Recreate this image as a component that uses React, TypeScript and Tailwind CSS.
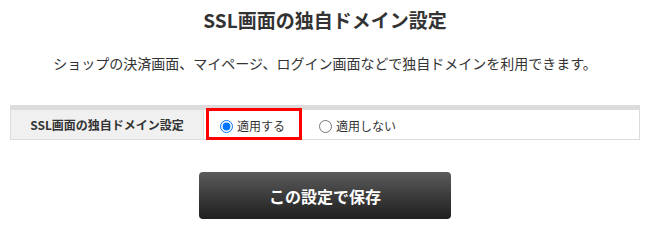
export default function App() {
  return (
    <div className="w-[650px] h-[229px] bg-white text-[#333] font-['Noto_Sans_CJK_JP',sans-serif]">
      <h1 className="pt-[8px] text-center text-[19px] font-bold leading-[24px]">
        SSL画面の独自ドメイン設定
      </h1>
      <p className="mt-[21px] text-center text-[14px] leading-[20px]">
        ショップの決済画面、マイページ、ログイン画面などで独自ドメインを利用できます。
      </p>

      <div className="mx-[10px] mt-[32px] flex h-[35px] border border-t-[5px] border-[#dcdcdc]">
        <div className="flex w-[193px] items-center justify-center border-r border-[#dcdcdc] bg-[#f0f0f0] text-[12px] font-bold">
          SSL画面の独自ドメイン設定
        </div>
        <div className="flex items-center pl-[2px] text-[12px]">
          <label className="relative flex h-full w-[96px] items-center gap-[4px] pl-[14px] pt-[3px]">
            <span className="absolute -top-[2px] left-0 h-[32px] w-[96px] border-[3px] border-[#ff0000]" />
            <input type="radio" name="ssl" defaultChecked className="m-0 h-[13px] w-[13px] accent-[#0075ff]" />
            <span>適用する</span>
          </label>
          <label className="ml-[17px] flex items-center gap-[4px] pt-[3px]">
            <input type="radio" name="ssl" className="m-0 h-[13px] w-[13px]" />
            <span>適用しない</span>
          </label>
        </div>
      </div>

      <div className="mt-[32px] flex justify-center">
        <button className="h-[47px] w-[252px] rounded-[4px] bg-gradient-to-b from-[#5c5c5c] to-[#1f1f1f] text-[16px] font-bold text-white">
          この設定で保存
        </button>
      </div>
    </div>
  )
}
